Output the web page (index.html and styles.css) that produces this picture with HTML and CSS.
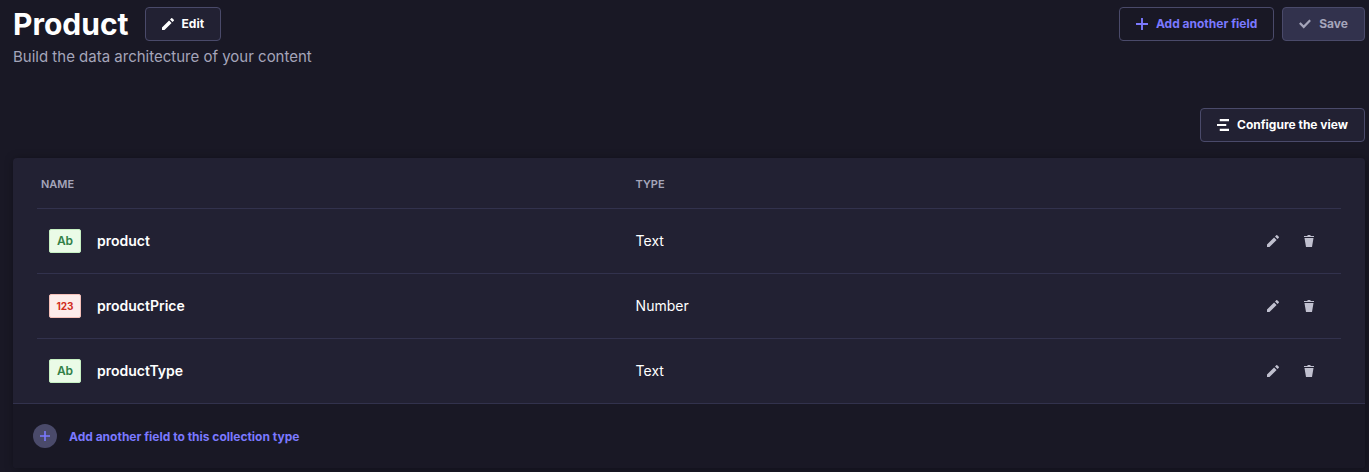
FILE: index.html
```html
<!DOCTYPE html>
<html lang="en">
<head>
  <meta charset="UTF-8">
  <title>Content-Type Builder</title>
  <meta name="viewport" content="width=device-width, initial-scale=1.0">
  <link rel="stylesheet" href="styles.css">
</head>
<body>

  <!-- Shared icons -->
  <svg class="sprite" aria-hidden="true">
    <symbol id="pencil" viewBox="0 0 24 24">
      <path fill-rule="evenodd" d="M23.604 3.514c.528.528.528 1.36 0 1.887l-2.622 2.607-4.99-4.99L18.6.396a1.322 1.322 0 0 1 1.887 0l3.118 3.118ZM0 24v-4.99l14.2-14.2 4.99 4.99L4.99 24H0Z"/>
    </symbol>
    <symbol id="trash" viewBox="0 0 24 24">
      <path d="M3.236 6.149a.2.2 0 0 0-.197.233L6 24h12l2.96-17.618a.2.2 0 0 0-.196-.233H3.236ZM21.8 1.983c.11 0 .2.09.2.2v1.584a.2.2 0 0 1-.2.2H2.2a.2.2 0 0 1-.2-.2V2.183c0-.11.09-.2.2-.2h5.511c.9 0 1.631-1.09 1.631-1.983h5.316c0 .894.73 1.983 1.631 1.983H21.8Z"/>
    </symbol>
    <symbol id="plus" viewBox="0 0 24 24">
      <path d="M24 13.604a.3.3 0 0 1-.3.3h-9.795V23.7a.3.3 0 0 1-.3.3h-3.21a.3.3 0 0 1-.3-.3v-9.795H.3a.3.3 0 0 1-.3-.3v-3.21a.3.3 0 0 1 .3-.3h9.795V.3a.3.3 0 0 1 .3-.3h3.21a.3.3 0 0 1 .3.3v9.795H23.7a.3.3 0 0 1 .3.3v3.21Z"/>
    </symbol>
    <symbol id="check" viewBox="0 0 24 24">
      <path d="M20.727 2.97a.2.2 0 0 1 .286 0l2.85 2.89a.2.2 0 0 1 0 .28L9.554 20.854a.2.2 0 0 1-.285 0l-9.13-9.243a.2.2 0 0 1 0-.281l2.85-2.892a.2.2 0 0 1 .284 0l6.14 6.209L20.726 2.97Z"/>
    </symbol>
    <symbol id="layers" viewBox="0 0 24 24">
      <path d="M5.5 0H24v4.4H5.5zM0 9.8h18.5v4.4H0zM5.5 19.6H24V24H5.5z"/>
    </symbol>
  </svg>

  <header class="page-header">
    <div>
      <div class="title-row">
        <h1>Product</h1>
        <button type="button" class="btn btn-tertiary"><svg class="icon"><use href="#pencil"/></svg>Edit</button>
      </div>
      <p class="subtitle">Build the data architecture of your content</p>
    </div>
    <div class="actions">
      <button type="button" class="btn btn-secondary"><svg class="icon"><use href="#plus"/></svg>Add another field</button>
      <button type="submit" class="btn btn-disabled" disabled><svg class="icon"><use href="#check"/></svg>Save</button>
    </div>
  </header>

  <main>
    <div class="toolbar">
      <button type="button" class="btn btn-tertiary"><svg class="icon"><use href="#layers"/></svg>Configure the view</button>
    </div>

    <section class="card">
      <div class="table-wrapper">
        <table>
          <thead>
            <tr>
              <th class="col-name">Name</th>
              <th>Type</th>
              <td></td>
            </tr>
          </thead>
          <tbody>
            <tr>
              <td>
                <div class="field"><span class="badge badge-text">Ab</span>product</div>
              </td>
              <td>Text</td>
              <td>
                <div class="row-actions">
                  <button type="button" class="icon-btn" aria-label="Edit product"><svg class="icon"><use href="#pencil"/></svg></button>
                  <button type="button" class="icon-btn" aria-label="Delete product"><svg class="icon"><use href="#trash"/></svg></button>
                </div>
              </td>
            </tr>
            <tr>
              <td>
                <div class="field"><span class="badge badge-number">123</span>productPrice</div>
              </td>
              <td>Number</td>
              <td>
                <div class="row-actions">
                  <button type="button" class="icon-btn" aria-label="Edit productPrice"><svg class="icon"><use href="#pencil"/></svg></button>
                  <button type="button" class="icon-btn" aria-label="Delete productPrice"><svg class="icon"><use href="#trash"/></svg></button>
                </div>
              </td>
            </tr>
            <tr>
              <td>
                <div class="field"><span class="badge badge-text">Ab</span>productType</div>
              </td>
              <td>Text</td>
              <td>
                <div class="row-actions">
                  <button type="button" class="icon-btn" aria-label="Edit productType"><svg class="icon"><use href="#pencil"/></svg></button>
                  <button type="button" class="icon-btn" aria-label="Delete productType"><svg class="icon"><use href="#trash"/></svg></button>
                </div>
              </td>
            </tr>
          </tbody>
        </table>
      </div>
      <button type="button" class="add-field">
        <span class="add-circle"><svg class="icon"><use href="#plus"/></svg></span>
        Add another field to this collection type
      </button>
    </section>
  </main>

</body>
</html>
```
FILE: styles.css
```css
* {
  box-sizing: border-box;
}
body {
  margin: 0;
  padding: 4px 4px 4px 13px;
  background: #191825;
  color: #ffffff;
  font-family: Inter, "Liberation Sans", sans-serif;
  font-size: 14px;
  line-height: 20px;
}
h1, p {
  margin: 0;
}
button {
  font-family: inherit;
  cursor: pointer;
}
.sprite {
  display: none;
}
.icon {
  display: block;
  width: 12px;
  height: 12px;
  fill: currentColor;
}

/* Header */
.page-header {
  display: flex;
  justify-content: space-between;
  align-items: flex-start;
}
.title-row {
  display: flex;
  align-items: center;
  gap: 16px;
}
h1 {
  font-size: 30px;
  line-height: 40px;
  font-weight: 700;
}
.subtitle {
  color: #a5a5ba;
  font-size: 15px;
  line-height: 26px;
}
.actions {
  display: flex;
  gap: 8px;
  padding-top: 3px;
}

/* Buttons */
.btn {
  display: flex;
  align-items: center;
  gap: 8px;
  height: 34px;
  padding: 0 16px;
  border: 1px solid #4a4a6a;
  border-radius: 4px;
  color: #ffffff;
  font-size: 12px;
  line-height: 14px;
  font-weight: 700;
}
.btn-tertiary {
  background: #222133;
}
.btn-secondary {
  background: #191825;
  color: #7b79ff;
}
.btn-disabled {
  background: #32324d;
  color: #a5a5ba;
}
.toolbar {
  display: flex;
  justify-content: flex-end;
  padding: 38px 0 16px;
}

/* Fields table */
.card {
  border-radius: 4px;
  background: #222133;
  box-shadow: 1px 1px 10px rgba(3, 3, 5, 0.35);
}
.table-wrapper {
  padding: 0 24px;
}
table {
  width: 100%;
  table-layout: fixed;
  border-spacing: 0;
}
.col-name {
  width: 45.6%;
}
th, td {
  padding: 0 4px;
  text-align: left;
  border-bottom: 1px solid #32324d;
}
thead tr {
  height: 51px;
}
tbody tr {
  height: 65px;
}
tbody tr:last-child {
  height: 64px;
}
tbody tr:last-child td {
  border-bottom: none;
}
th {
  padding-top: 2px;
  color: #a5a5ba;
  font-size: 11px;
  font-weight: 600;
  text-transform: uppercase;
}
.field {
  display: flex;
  align-items: center;
  gap: 16px;
  padding-left: 8px;
  font-weight: 600;
}
.badge {
  width: 32px;
  height: 24px;
  border: 1px solid;
  border-radius: 2px;
  line-height: 22px;
  text-align: center;
}
.badge-text {
  background: #eafbe7;
  border-color: #c6f0c2;
  color: #328048;
  font-size: 12px;
}
.badge-number {
  background: #fcecea;
  border-color: #f5c0b8;
  color: #d02b20;
  font-size: 10px;
  font-weight: 700;
}
.row-actions {
  display: flex;
  justify-content: flex-end;
  gap: 4px;
  padding-right: 12px;
}
.icon-btn {
  padding: 10px;
  border: none;
  background: none;
  color: #c0c0cf;
}

/* Card footer */
.add-field {
  display: flex;
  align-items: center;
  gap: 12px;
  width: 100%;
  height: 65px;
  padding: 0 20px;
  border: none;
  border-top: 1px solid #32324d;
  border-radius: 0 0 4px 4px;
  background: #191825;
  color: #7b79ff;
  font-size: 12px;
  font-weight: 700;
}
.add-circle {
  display: flex;
  align-items: center;
  justify-content: center;
  width: 24px;
  height: 24px;
  border-radius: 50%;
  background: #4a4a6a;
}
.add-circle .icon {
  width: 10px;
  height: 10px;
}
```
